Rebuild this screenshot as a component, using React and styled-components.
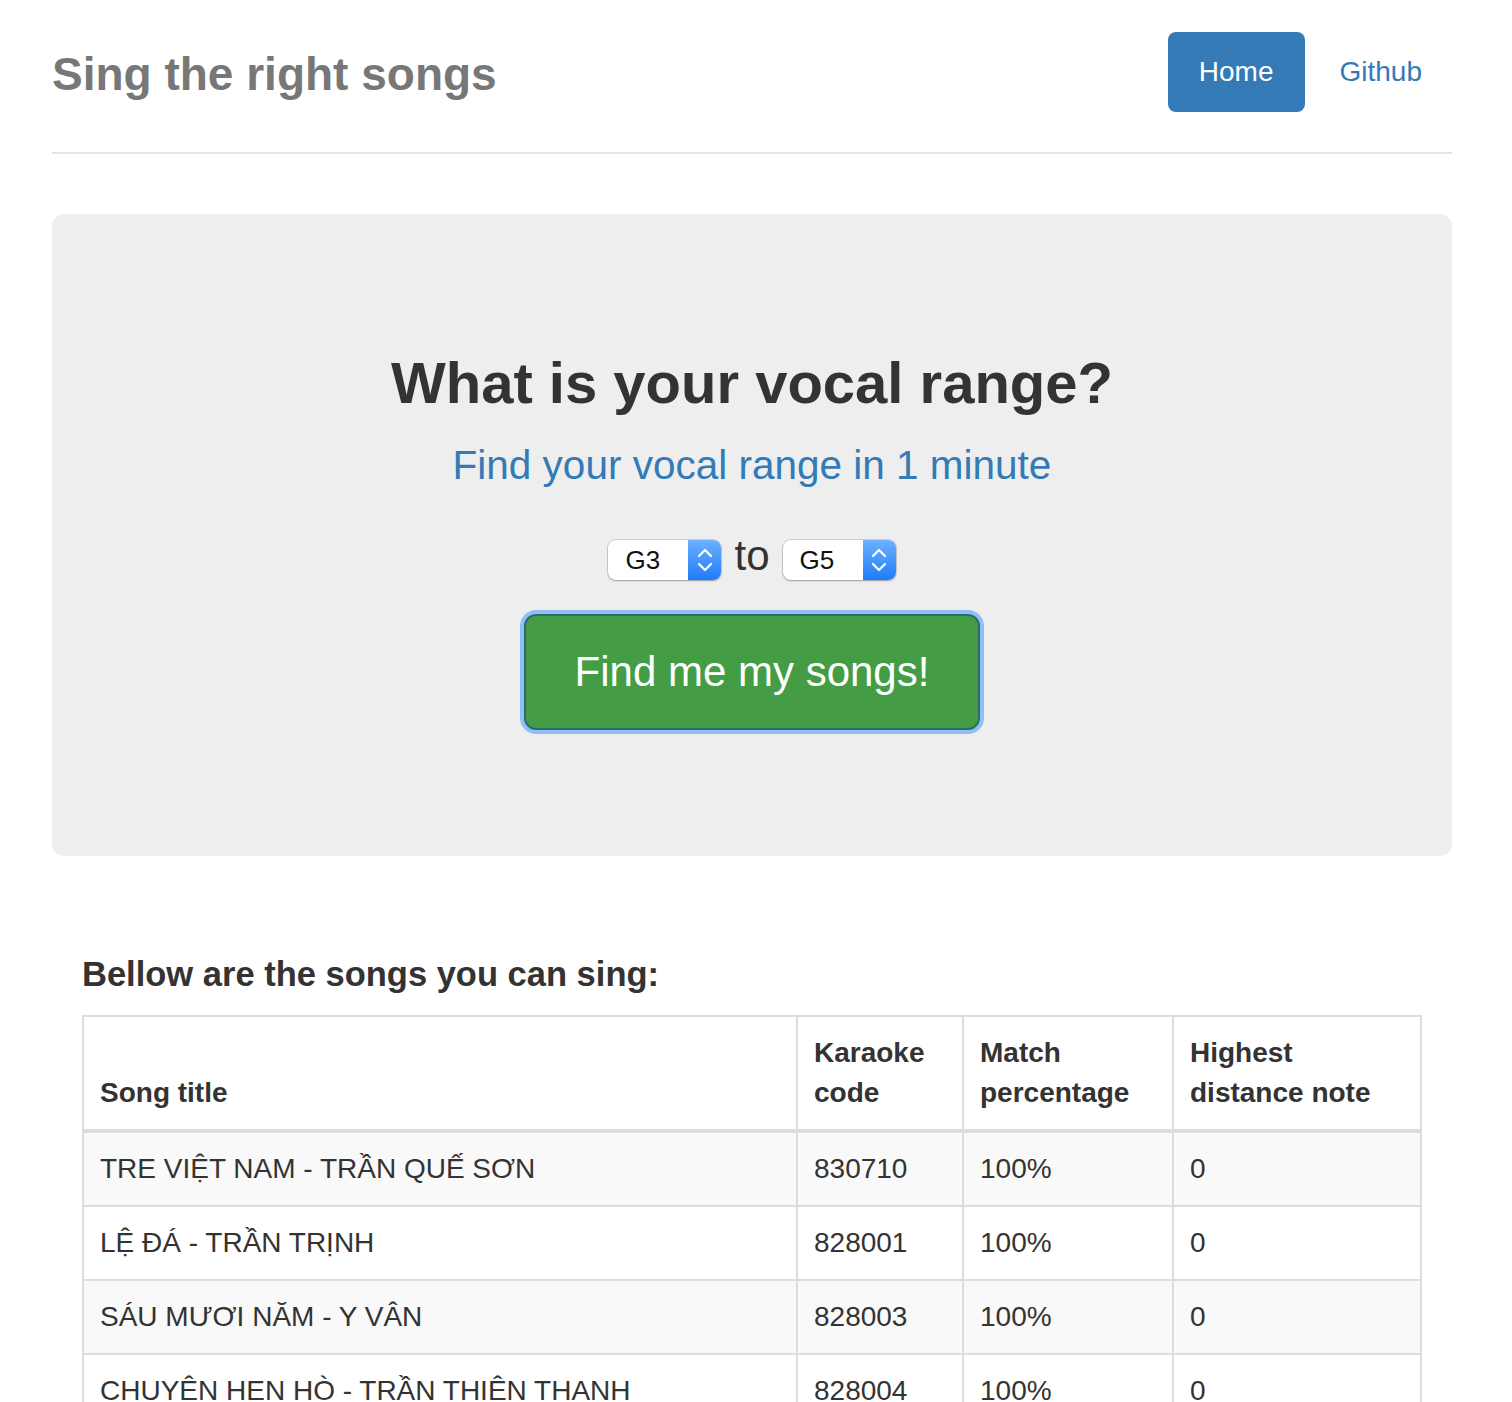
import { createGlobalStyle, styled } from "styled-components";

const songs = [
  { title: "TRE VIỆT NAM - TRẦN QUẾ SƠN", code: "830710", match: "100%", distance: "0" },
  { title: "LỆ ĐÁ - TRẦN TRỊNH", code: "828001", match: "100%", distance: "0" },
  { title: "SÁU MƯƠI NĂM - Y VÂN", code: "828003", match: "100%", distance: "0" },
  { title: "CHUYỆN HẸN HÒ - TRẦN THIỆN THANH", code: "828004", match: "100%", distance: "0" },
];

function NoteSelect({ value }) {
  return (
    <SelectBox>
      <SelectValue>{value}</SelectValue>
      <SelectArrows>
        <svg width="16" height="28" viewBox="0 0 16 28" fill="none">
          <path d="M2 10 L8 4 L14 10" stroke="#fff" strokeWidth="2.2" strokeLinecap="round" strokeLinejoin="round" />
          <path d="M2 18 L8 24 L14 18" stroke="#fff" strokeWidth="2.2" strokeLinecap="round" strokeLinejoin="round" />
        </svg>
      </SelectArrows>
    </SelectBox>
  );
}

export default function App() {
  return (
    <>
      <GlobalStyle />
      <Page>
        <Header>
          <SiteTitle>Sing the right songs</SiteTitle>
          <Nav>
            <NavPill $active>Home</NavPill>
            <NavPill>Github</NavPill>
          </Nav>
        </Header>

        <Jumbotron>
          <Heading>What is your vocal range?</Heading>
          <Lead>Find your vocal range in 1 minute</Lead>
          <RangeRow>
            <NoteSelect value="G3" />
            <RangeWord>to</RangeWord>
            <NoteSelect value="G5" />
          </RangeRow>
          <FindButton>Find me my songs!</FindButton>
        </Jumbotron>

        <Results>
          <ResultsTitle>Bellow are the songs you can sing:</ResultsTitle>
          <Table>
            <colgroup>
              <col style={{ width: 714 }} />
              <col style={{ width: 166 }} />
              <col style={{ width: 210 }} />
              <col />
            </colgroup>
            <thead>
              <tr>
                <Th>Song title</Th>
                <Th>Karaoke code</Th>
                <Th>Match percentage</Th>
                <Th>Highest distance note</Th>
              </tr>
            </thead>
            <tbody>
              {songs.map((song) => (
                <Row key={song.code}>
                  <Td>{song.title}</Td>
                  <Td>{song.code}</Td>
                  <Td>{song.match}</Td>
                  <Td>{song.distance}</Td>
                </Row>
              ))}
            </tbody>
          </Table>
        </Results>
      </Page>
    </>
  );
}

const GlobalStyle = createGlobalStyle`
  html, body {
    margin: 0;
    height: 1402px;
    overflow: hidden;
    background: #fff;
  }
  body {
    font-family: "Liberation Sans", Arial, sans-serif;
    font-size: 28px;
    line-height: 1.42857;
    color: #333;
  }
  * {
    box-sizing: border-box;
  }
`;

const Page = styled.div`
  width: 1400px;
  margin-left: 52px;
  padding-top: 32px;
`;

const Header = styled.header`
  display: flex;
  justify-content: space-between;
  align-items: flex-start;
  padding-bottom: 40px;
  border-bottom: 2px solid #e5e5e5;
`;

const SiteTitle = styled.h3`
  margin: 0;
  font-size: 46px;
  line-height: 84px;
  height: 80px;
  font-weight: 700;
  color: #777;
`;

const Nav = styled.nav`
  display: flex;
  gap: 4px;
`;

const NavPill = styled.a`
  display: block;
  padding: ${(props) => (props.$active ? "20px 31px" : "20px 30px 20px 31px")};
  font-size: 28px;
  line-height: 40px;
  border-radius: 8px;
  color: ${(props) => (props.$active ? "#fff" : "#337ab7")};
  background: ${(props) => (props.$active ? "#337ab7" : "transparent")};
  text-decoration: none;
  cursor: pointer;
`;

const Jumbotron = styled.section`
  display: flex;
  flex-direction: column;
  align-items: center;
  margin-top: 60px;
  padding: 96px 60px 126px;
  background: #eee;
  border-radius: 12px;
  text-align: center;
`;

const Heading = styled.h2`
  margin: 40px 0 20px;
  font-size: 58px;
  line-height: 66px;
  font-weight: 700;
  color: #333;
`;

const Lead = styled.p`
  margin: 0;
  font-size: 40.5px;
  line-height: 58.8px;
  font-weight: 400;
  color: #337ab7;
`;

const RangeRow = styled.div`
  display: flex;
  align-items: center;
  gap: 13px;
  margin-top: 45px;
`;

const RangeWord = styled.span`
  font-size: 42px;
  line-height: 40px;
  color: #333;
  position: relative;
  top: -4px;
`;

const SelectBox = styled.div`
  display: flex;
  width: 113px;
  height: 40px;
  border-radius: 8px;
  background: #fff;
  box-shadow: 0 0 0 1px rgba(0, 0, 0, 0.12), 0 1px 2px rgba(0, 0, 0, 0.25);
  overflow: hidden;
`;

const SelectValue = styled.span`
  flex: 1;
  padding-left: 17px;
  font-size: 26px;
  line-height: 40px;
  color: #111;
  text-align: left;
`;

const SelectArrows = styled.span`
  display: flex;
  align-items: center;
  justify-content: center;
  width: 33px;
  background: linear-gradient(#6db1ff, #1f7cfb);
`;

const FindButton = styled.button`
  margin-top: 34px;
  width: 456px;
  height: 116px;
  padding: 0;
  font-family: "Liberation Sans", Arial, sans-serif;
  font-size: 42px;
  color: #fff;
  background: #449d44;
  border: 2px solid #2f6a6e;
  border-radius: 12px;
  box-shadow: 0 0 0 4px #8fc0f4;
  cursor: pointer;
`;

const Results = styled.section`
  padding: 0 30px;
`;

const ResultsTitle = styled.h4`
  margin: 98px 0 21px;
  font-size: 34.5px;
  line-height: 40px;
  font-weight: 700;
  color: #333;
`;

const Table = styled.table`
  width: 100%;
  border-collapse: collapse;
  table-layout: fixed;
  border: 2px solid #ddd;
  background: #fff;
`;

const Th = styled.th`
  padding: 16px;
  text-align: left;
  vertical-align: bottom;
  font-weight: 700;
  font-size: 28px;
  line-height: 40px;
  border: 2px solid #ddd;
  border-bottom-width: 4px;
`;

const Row = styled.tr`
  &:nth-child(odd) {
    background: #f9f9f9;
  }
`;

const Td = styled.td`
  padding: 16px;
  font-size: 28px;
  line-height: 40px;
  border: 2px solid #ddd;
  white-space: nowrap;
`;
